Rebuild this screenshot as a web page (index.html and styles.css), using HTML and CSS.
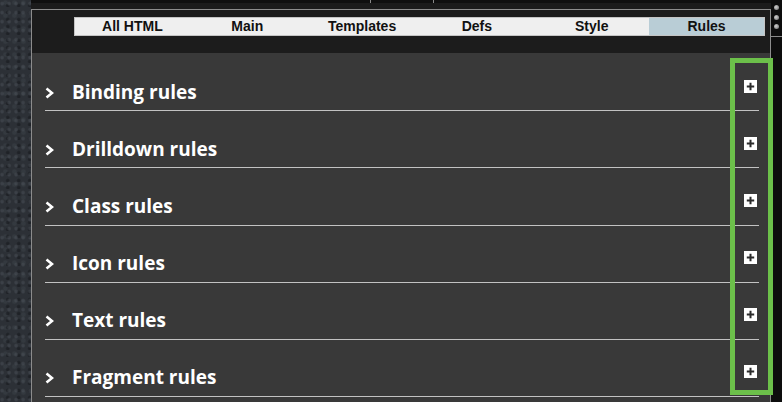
FILE: index.html
```html
<!DOCTYPE html>
<html lang="en">
<head>
  <meta charset="UTF-8" />
  <title>Rules</title>
  <link rel="stylesheet" href="styles.css">
</head>
<body>
  <div class="backdrop"></div>

  <div class="window">
    <div class="window-top">
      <span class="tick"></span>
      <span class="tick tick-2"></span>
    </div>

    <div class="panel">
      <div class="panel-head">
        <nav class="tabs">
          <a class="tab">All HTML</a>
          <a class="tab">Main</a>
          <a class="tab">Templates</a>
          <a class="tab">Defs</a>
          <a class="tab">Style</a>
          <a class="tab active">Rules</a>
        </nav>
      </div>

      <div class="rules">
        <div class="rule">
          <svg class="chevron" viewBox="0 0 9 12"><polyline points="1.5,1.5 7,6 1.5,10.5" /></svg>
          <span class="rule-title">Binding rules</span>
          <svg class="add" viewBox="0 0 13 13"><rect width="13" height="13" /><path d="M6.5 2.8v7.4M2.8 6.5h7.4" /></svg>
        </div>
        <div class="rule">
          <svg class="chevron" viewBox="0 0 9 12"><polyline points="1.5,1.5 7,6 1.5,10.5" /></svg>
          <span class="rule-title">Drilldown rules</span>
          <svg class="add" viewBox="0 0 13 13"><rect width="13" height="13" /><path d="M6.5 2.8v7.4M2.8 6.5h7.4" /></svg>
        </div>
        <div class="rule">
          <svg class="chevron" viewBox="0 0 9 12"><polyline points="1.5,1.5 7,6 1.5,10.5" /></svg>
          <span class="rule-title">Class rules</span>
          <svg class="add" viewBox="0 0 13 13"><rect width="13" height="13" /><path d="M6.5 2.8v7.4M2.8 6.5h7.4" /></svg>
        </div>
        <div class="rule">
          <svg class="chevron" viewBox="0 0 9 12"><polyline points="1.5,1.5 7,6 1.5,10.5" /></svg>
          <span class="rule-title">Icon rules</span>
          <svg class="add" viewBox="0 0 13 13"><rect width="13" height="13" /><path d="M6.5 2.8v7.4M2.8 6.5h7.4" /></svg>
        </div>
        <div class="rule">
          <svg class="chevron" viewBox="0 0 9 12"><polyline points="1.5,1.5 7,6 1.5,10.5" /></svg>
          <span class="rule-title">Text rules</span>
          <svg class="add" viewBox="0 0 13 13"><rect width="13" height="13" /><path d="M6.5 2.8v7.4M2.8 6.5h7.4" /></svg>
        </div>
        <div class="rule">
          <svg class="chevron" viewBox="0 0 9 12"><polyline points="1.5,1.5 7,6 1.5,10.5" /></svg>
          <span class="rule-title">Fragment rules</span>
          <svg class="add" viewBox="0 0 13 13"><rect width="13" height="13" /><path d="M6.5 2.8v7.4M2.8 6.5h7.4" /></svg>
        </div>
      </div>
    </div>
  </div>

  <div class="scrollbar">
    <span class="dot"></span>
    <span class="dot"></span>
    <span class="dot"></span>
    <span class="scroll-line"></span>
  </div>

  <!-- annotation box over the add buttons -->
  <div class="highlight"></div>
</body>
</html>
```

FILE: styles.css
```css
html, body {
  height: 100%;
}
body {
  margin: 0;
  display: flex;
  overflow: hidden;
  background-color: #0c0c0c;
  font-family: 'Open Sans', sans-serif;
  position: relative;
}
.backdrop {
  width: 31px;
  flex: none;
  background-color: #2c3036;
  background-image:
    radial-gradient(circle at 30% 40%, rgba(78, 84, 92, 0.45) 0 1px, transparent 2.5px),
    radial-gradient(circle at 70% 80%, rgba(18, 20, 24, 0.5) 0 1px, transparent 2.5px),
    radial-gradient(circle at 60% 20%, rgba(64, 70, 78, 0.4) 0 1.5px, transparent 3px);
  background-size: 7px 9px, 11px 7px, 9px 13px;
}
.window {
  flex: 1;
  display: flex;
  flex-direction: column;
  background-color: #1b1b1b;
}
.window-top {
  height: 3px;
  background-color: #0f0f0f;
  display: flex;
  padding-left: 339px;
  margin-bottom: 6px;
}
.tick {
  width: 1px;
  height: 3px;
  background-color: #8a8a8a;
}
.tick-2 {
  margin-left: 62px;
}
.panel {
  flex: 1;
  border: 1px solid #8c8c8c;
  border-bottom: none;
  display: flex;
  flex-direction: column;
}
.panel-head {
  height: 43px;
  background-color: #1c1c1c;
  padding: 7px 5px 0 42px;
  box-sizing: border-box;
}
.tabs {
  display: flex;
  height: 19px;
  background-color: #efefef;
  border: 1px solid #c4c4c4;
  box-sizing: border-box;
}
.tab {
  flex: 1;
  text-align: center;
  font-family: 'Liberation Sans', Arial, sans-serif;
  font-weight: bold;
  font-size: 14px;
  line-height: 17px;
  color: #111;
}
.tab.active {
  background-color: #b9cdd6;
}
.rules {
  flex: 1;
  padding-top: 1px;
  background-color: #393939;
}
.rule {
  display: flex;
  align-items: flex-start;
  margin: 0 11px 0 13px;
  padding: 24.5px 0 5.7px;
  border-bottom: 1px solid #c2c2c2;
}
.chevron {
  width: 9px;
  height: 12px;
  margin-top: 8px;
  flex: none;
}
.chevron polyline {
  fill: none;
  stroke: #ffffff;
  stroke-width: 2.6;
}
.rule-title {
  flex: 1;
  margin-left: 18px;
  font-size: 19px;
  font-weight: bold;
  line-height: 26px;
  color: #ffffff;
}
.add {
  width: 13px;
  height: 13px;
  margin-top: 1px;
  margin-right: 2px;
  flex: none;
}
.add rect {
  fill: #ffffff;
}
.add path {
  stroke: #2b2b2b;
  stroke-width: 2;
}
.scrollbar {
  width: 11px;
  flex: none;
  display: flex;
  flex-direction: column;
  align-items: center;
  padding-top: 5px;
  gap: 4.7px;
  background-color: #0d0d0d;
}
.dot {
  width: 5px;
  height: 5px;
  border-radius: 50%;
  background: radial-gradient(circle at 40% 40%, #d0d0d0, #6a6a6a);
}
.scroll-line {
  width: 11px;
  height: 1px;
  margin-top: 2px;
  background-color: #8a8a8a;
}
.highlight {
  position: absolute;
  left: 730px;
  top: 58px;
  width: 43px;
  height: 337px;
  border: 5px solid #6cc04a;
  box-sizing: border-box;
}
```
